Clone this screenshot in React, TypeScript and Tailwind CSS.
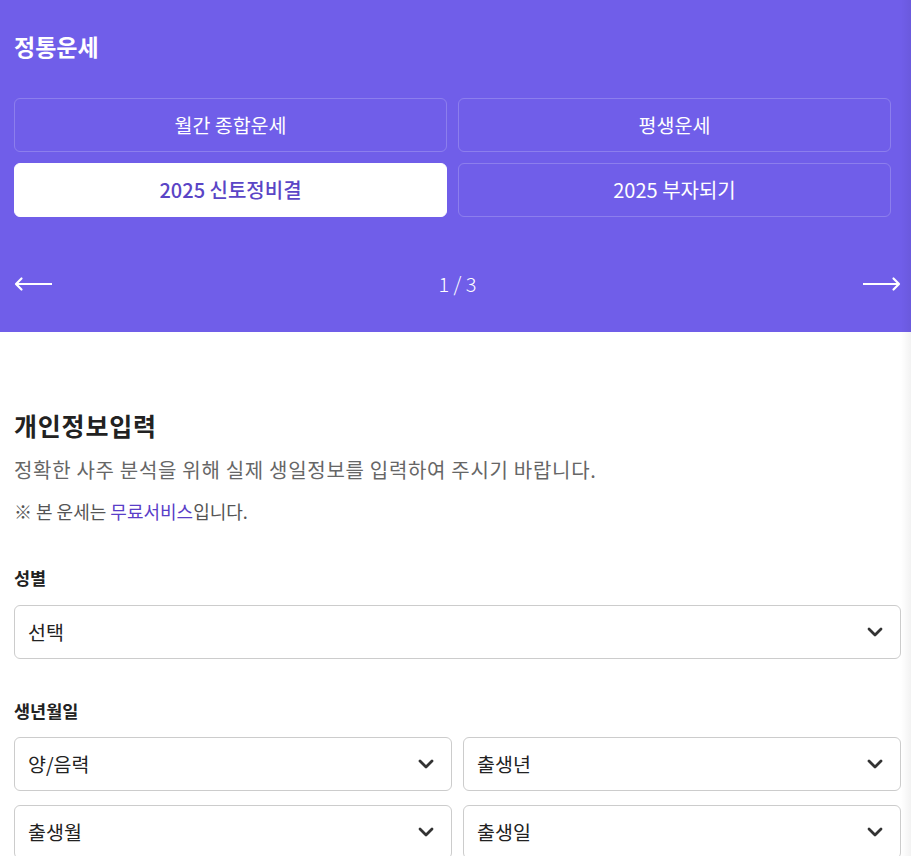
import React from "react";

const Chevron = () => (
  <svg width="16" height="10" viewBox="0 0 16 10" fill="none">
    <path d="M2 2 L8 8 L14 2" stroke="#333" strokeWidth="2.8" strokeLinecap="round" strokeLinejoin="round" />
  </svg>
);

const Select = ({ label }: { label: string }) => (
  <div className="flex h-[54px] items-center justify-between rounded-[6px] border border-[#cccccc] bg-white pl-[13px] pr-[17px]">
    <span className="text-[19.5px] text-[#222]">{label}</span>
    <Chevron />
  </div>
);

const ArrowLeft = () => (
  <svg width="40" height="16" viewBox="0 0 40 16" fill="none">
    <path d="M2 8 H38" stroke="white" strokeWidth="2.2" />
    <path d="M7.5 2.5 L2 8 L7.5 13.5" stroke="white" strokeWidth="2.2" strokeLinecap="round" strokeLinejoin="round" />
  </svg>
);

const ArrowRight = () => (
  <svg width="40" height="16" viewBox="0 0 40 16" fill="none">
    <path d="M2 8 H38" stroke="white" strokeWidth="2.2" />
    <path d="M32.5 2.5 L38 8 L32.5 13.5" stroke="white" strokeWidth="2.2" strokeLinecap="round" strokeLinejoin="round" />
  </svg>
);

export default function App() {
  const font = { fontFamily: '"Noto Sans CJK KR", "Noto Sans", sans-serif' };
  return (
    <div className="relative min-h-[856px] w-full overflow-hidden bg-white" style={font}>
      <div className="bg-[#705ee9] pl-[14px] pr-[10px] pt-[30px] pb-[28px]">
        <h1 className="h-[32px] text-[23px] leading-[32px] font-bold text-white">정통운세</h1>
        <div className="mr-[10px] mt-[36px] grid grid-cols-2 gap-x-[11px] gap-y-[11px]">
          <button className="flex h-[54px] items-center justify-center rounded-[6px] border border-white/20 text-[19.5px] text-white">월간 종합운세</button>
          <button className="flex h-[54px] items-center justify-center rounded-[6px] border border-white/20 text-[19.5px] text-white">평생운세</button>
          <button className="flex h-[54px] items-center justify-center rounded-[6px] border border-white bg-white text-[20px] font-medium text-[#5a45c6]">2025 신토정비결</button>
          <button className="flex h-[54px] items-center justify-center rounded-[6px] border border-white/20 text-[20px] text-white">2025 부자되기</button>
        </div>
        <div className="mt-[47px] flex h-[40px] items-center justify-between">
          <ArrowLeft />
          <span className="text-[20px] font-light text-white">1 / 3</span>
          <ArrowRight />
        </div>
      </div>

      <div className="pl-[14px] pr-[10px] pt-[76px] pb-10">
        <h2 className="text-[25px] leading-[34px] font-bold tracking-[0.8px] text-[#222]">개인정보입력</h2>
        <p className="mt-[14px] text-[20px] leading-[28px] tracking-[0.7px] text-[#666]">정확한 사주 분석을 위해 실제 생일정보를 입력하여 주시기 바랍니다.</p>
        <p className="mt-[14px] text-[18px] leading-[26px] text-[#555]">
          ※ 본 운세는 <span className="text-[#5a3ec8]">무료서비스</span>입니다.
        </p>

        <div className="mt-[41px] text-[17.5px] leading-[26px] font-bold text-[#222]">성별</div>
        <div className="mt-[14px]">
          <Select label="선택" />
        </div>

        <div className="mt-[39px] text-[17.5px] leading-[26px] font-bold text-[#222]">생년월일</div>
        <div className="mt-[13px] grid grid-cols-2 gap-x-[11px] gap-y-[14px]">
          <Select label="양/음력" />
          <Select label="출생년" />
          <Select label="출생월" />
          <Select label="출생일" />
        </div>
      </div>

      <div className="pointer-events-none absolute right-0 top-0 h-full w-[10px] bg-linear-to-r from-transparent to-black/5" />
    </div>
  );
}
